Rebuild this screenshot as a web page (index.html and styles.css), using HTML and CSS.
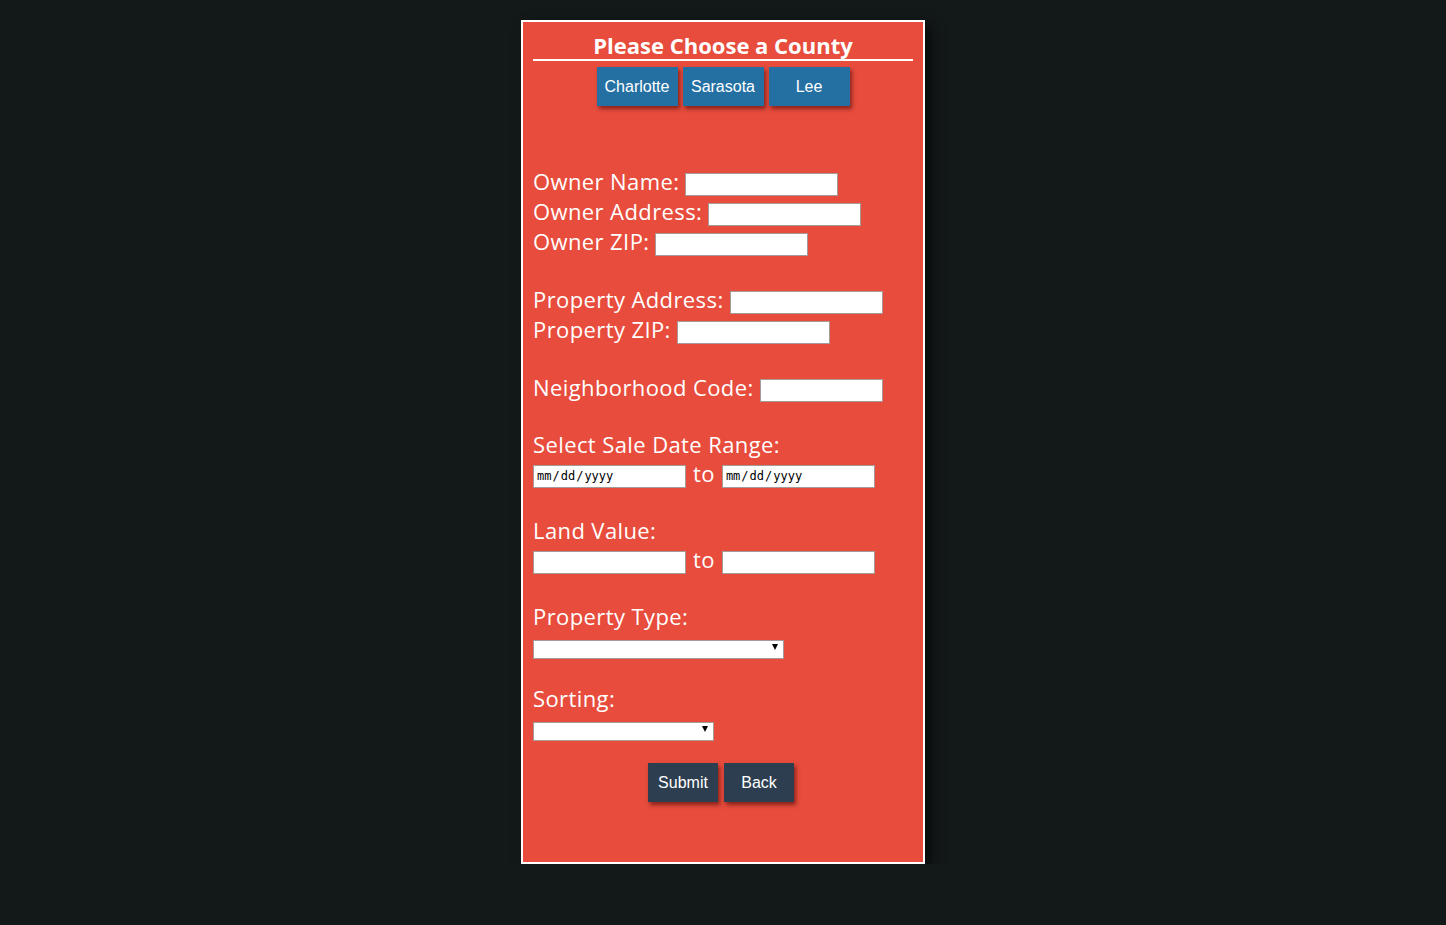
FILE: index.html
```html
<!DOCTYPE html>
<html lang="en">
<head>
<meta charset="utf-8">
<title>Please Choose a County</title>
<link rel="stylesheet" href="styles.css">
</head>
<body>
<div class="panel">
  <h1 class="title">Please Choose a County</h1>
  <div class="counties">
    <button class="county">Charlotte</button>
    <button class="county">Sarasota</button>
    <button class="county">Lee</button>
  </div>
  <form class="form">
    <div class="row"><span class="lbl">Owner Name:</span><input class="field" type="text"></div>
    <div class="row"><span class="lbl">Owner Address:</span><input class="field" type="text"></div>
    <div class="row"><span class="lbl">Owner ZIP:</span><input class="field" type="text"></div>
    <div class="spacer"></div>
    <div class="row"><span class="lbl">Property Address:</span><input class="field" type="text"></div>
    <div class="row"><span class="lbl">Property ZIP:</span><input class="field" type="text"></div>
    <div class="spacer"></div>
    <div class="row"><span class="lbl">Neighborhood Code:</span><input class="field short" type="text"></div>
    <div class="spacer"></div>
    <div class="row label-row"><span class="lbl">Select Sale Date Range:</span></div>
    <div class="row range"><input class="field date" type="date"><span class="lbl to">to</span><input class="field date" type="date"></div>
    <div class="spacer"></div>
    <div class="row label-row"><span class="lbl">Land Value:</span></div>
    <div class="row range"><input class="field" type="text"><span class="lbl to">to</span><input class="field" type="text"></div>
    <div class="spacer"></div>
    <div class="row label-row"><span class="lbl">Property Type:</span></div>
    <div class="row select-row"><span class="select-wrap wide"><select class="sel"><option></option></select></span></div>
    <div class="spacer"></div>
    <div class="row label-row"><span class="lbl">Sorting:</span></div>
    <div class="row select-row"><span class="select-wrap narrow"><select class="sel"><option></option></select></span></div>
    <div class="actions">
      <button class="action" type="button">Submit</button>
      <button class="action" type="button">Back</button>
    </div>
  </form>
</div>
</body>
</html>
```
FILE: styles.css
```css
html, body {
  margin: 0;
  padding: 0;
}
body {
  background: #131819;
  font-family: "Open Sans", "Liberation Sans", sans-serif;
}
.panel {
  box-sizing: border-box;
  width: 404px;
  height: 844px;
  margin: 20px auto 0;
  padding: 0 10px;
  background: #e74c3c;
  border: 2px solid #ffffff;
  box-shadow: 6px 6px 12px rgba(0, 0, 0, 0.6);
}
.title {
  margin: 11px 0 0;
  padding: 0 0 2px;
  font-size: 22px;
  line-height: 24px;
  font-weight: 700;
  color: #ffffff;
  text-align: center;
  border-bottom: 2px solid #ffffff;
}
.counties {
  display: flex;
  justify-content: center;
  gap: 5px;
  margin-top: 6px;
}
.county, .action {
  height: 39px;
  border: none;
  padding: 0;
  color: #ffffff;
  font-family: "Liberation Sans", Arial, sans-serif;
  font-size: 16px;
  box-shadow: 2px 3px 4px rgba(60, 0, 0, 0.55);
  cursor: pointer;
}
.county {
  width: 81px;
  background: #2470a3;
}
.form {
  margin-top: 63px;
}
.row {
  display: flex;
  align-items: center;
  height: 30px;
  gap: 6px;
}
.label-row {
  height: 28px;
}
.select-row {
  height: 26px;
}
.spacer {
  height: 28px;
}
.lbl {
  color: #ffffff;
  font-size: 22px;
  line-height: 24px;
  padding-bottom: 7px;
  letter-spacing: 0.4px;
  white-space: nowrap;
}
.to {
  padding: 0 0 6px;
  margin: 0 1px;
}
.field {
  box-sizing: border-box;
  width: 153px;
  height: 23px;
  margin: 0;
  padding: 0 2px;
  border: 1px solid #a49a99;
  background: #ffffff;
  border-radius: 0;
  outline: none;
}
.field.short {
  width: 123px;
}
.date {
  font-family: "DejaVu Sans Mono", "Liberation Mono", monospace;
  font-size: 12px;
  color: #000000;
}
.date::-webkit-calendar-picker-indicator {
  display: none;
}
.date::-webkit-inner-spin-button {
  display: none;
}
.select-wrap {
  position: relative;
  display: block;
  height: 19px;
}
.select-wrap.wide {
  width: 251px;
}
.select-wrap.narrow {
  width: 181px;
}
.select-wrap::after {
  content: "";
  position: absolute;
  right: 6px;
  top: 7px;
  border-left: 3.5px solid transparent;
  border-right: 3.5px solid transparent;
  border-top: 6px solid #000000;
  pointer-events: none;
}
.sel {
  -webkit-appearance: none;
  appearance: none;
  box-sizing: border-box;
  width: 100%;
  height: 19px;
  margin: 0;
  padding: 0;
  border: 1px solid #a49a99;
  background: #ffffff;
  border-radius: 0;
}
.actions {
  display: flex;
  justify-content: center;
  gap: 6px;
  margin-top: 22px;
  padding-right: 4px;
}
.action {
  width: 70px;
  background: #2c3e50;
}
```
